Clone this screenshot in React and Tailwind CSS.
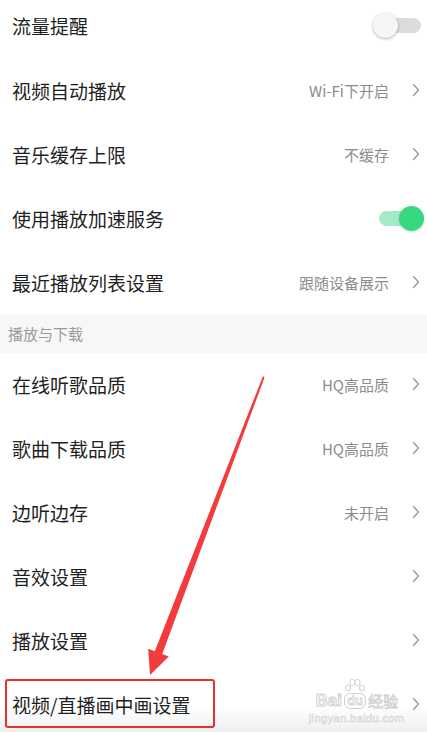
import React from 'react';

const FONT = "font-['Noto_Sans_CJK_SC','Noto_Sans',sans-serif]";

const Chevron = () => (
  <svg width="8" height="14" viewBox="0 0 8 14" className="shrink-0">
    <polyline points="1.5,1.5 6.5,7 1.5,12.5" fill="none" stroke="#9a9a9a" strokeWidth="1.4" strokeLinecap="round" strokeLinejoin="round" />
  </svg>
);

const Toggle = ({ on }) => (
  <div className="relative w-[48px] h-[25px] shrink-0">
    <div className={`absolute left-[3px] right-0 top-[5px] h-[15px] rounded-full ${on ? 'bg-[#a3ebc6]' : 'bg-[#dcdcdc]'}`} />
    <div
      className={`absolute top-0 h-[25px] w-[25px] rounded-full ${
        on ? 'right-0 bg-[#36d980] shadow-[0_1px_3px_rgba(0,0,0,0.15)]' : 'left-0 bg-[#f6f6f6] shadow-[0_1px_3px_rgba(0,0,0,0.3)]'
      }`}
    />
  </div>
);

const Row = ({ label, value, toggle, first, last, children }) => (
  <div
    className={`relative flex items-center justify-between pl-[12px] ${first ? 'h-[59px] pb-[8px]' : 'h-[64px] pb-[2px]'} ${
      toggle === undefined ? 'pr-[7px]' : toggle ? 'pr-[3px]' : 'pr-[6px]'
    } ${last ? 'bg-gradient-to-b from-white via-white to-[#ededed]' : 'bg-white'}`}
  >
    <span className="text-[19px] text-[#1f1f1f] leading-none">{label}</span>
    {children}
    {toggle !== undefined ? (
      <Toggle on={toggle} />
    ) : (
      <div className="flex items-center gap-[23px]">
        {value && <span className="text-[15px] text-[#8c8c8c] leading-none">{value}</span>}
        <Chevron />
      </div>
    )}
  </div>
);

const Watermark = () => (
  <div className="absolute left-[309px] top-[5px] flex flex-col items-center pointer-events-none">
    <div className="flex items-end leading-none">
      <span className="text-[17px] font-bold text-white [-webkit-text-stroke:1px_#d0d0d0] font-['Liberation_Sans',sans-serif] leading-[16px]">Bai</span>
      <span className="mx-[2px] flex flex-col items-center">
        <svg width="22" height="15" viewBox="0 0 22 15">
          <g fill="#fff" stroke="#d0d0d0" strokeWidth="1">
            <ellipse cx="4" cy="10" rx="2.6" ry="3" />
            <ellipse cx="8.5" cy="4.5" rx="2.6" ry="3.2" />
            <ellipse cx="13.5" cy="4.5" rx="2.6" ry="3.2" />
            <ellipse cx="18" cy="10" rx="2.6" ry="3" />
          </g>
        </svg>
        <span className="rounded-[6px] border border-[#d0d0d0] px-[2px] text-[13px] font-bold text-white [-webkit-text-stroke:0.8px_#d0d0d0] font-['Liberation_Sans',sans-serif] leading-[14px]">du</span>
      </span>
      <span className="text-[15px] text-white [-webkit-text-stroke:0.8px_#d0d0d0] leading-[16px]">经验</span>
    </div>
    <span className="mt-[4px] text-[11px] text-white [-webkit-text-stroke:0.6px_#d4d4d4] font-['Liberation_Sans',sans-serif] leading-none tracking-[0.4px]">jingyan.baidu.com</span>
  </div>
);

export default function App() {
  return (
    <div className={`relative w-[427px] h-[732px] overflow-hidden bg-white ${FONT}`}>
      <Row label="流量提醒" toggle={false} first />
      <Row label="视频自动播放" value="Wi-Fi下开启" />
      <Row label="音乐缓存上限" value="不缓存" />
      <Row label="使用播放加速服务" toggle={true} />
      <Row label="最近播放列表设置" value="跟随设备展示" />
      <div className="h-[38px] flex items-center pl-[8px] pb-[2px] bg-[#f7f7f7]">
        <span className="text-[15px] text-[#9a9a9a] leading-none">播放与下载</span>
      </div>
      <Row label="在线听歌品质" value="HQ高品质" />
      <Row label="歌曲下载品质" value="HQ高品质" />
      <Row label="边听边存" value="未开启" />
      <Row label="音效设置" />
      <Row label="播放设置" />
      <Row label="视频/直播画中画设置" last>
        <Watermark />
        <div className="absolute left-[5px] top-[6px] w-[210px] h-[49px] rounded-[3px] border-2 border-[#e8302f]" />
      </Row>

      {/* annotation arrow */}
      <svg className="absolute left-0 top-0 pointer-events-none" width="427" height="732" viewBox="0 0 427 732">
        <polygon
          points="263,376 264.5,377.5 162.2,654 168.8,656.5 150,675 148.2,648.7 154.8,651.2"
          fill="#f43a3a"
        />
      </svg>
    </div>
  );
}
